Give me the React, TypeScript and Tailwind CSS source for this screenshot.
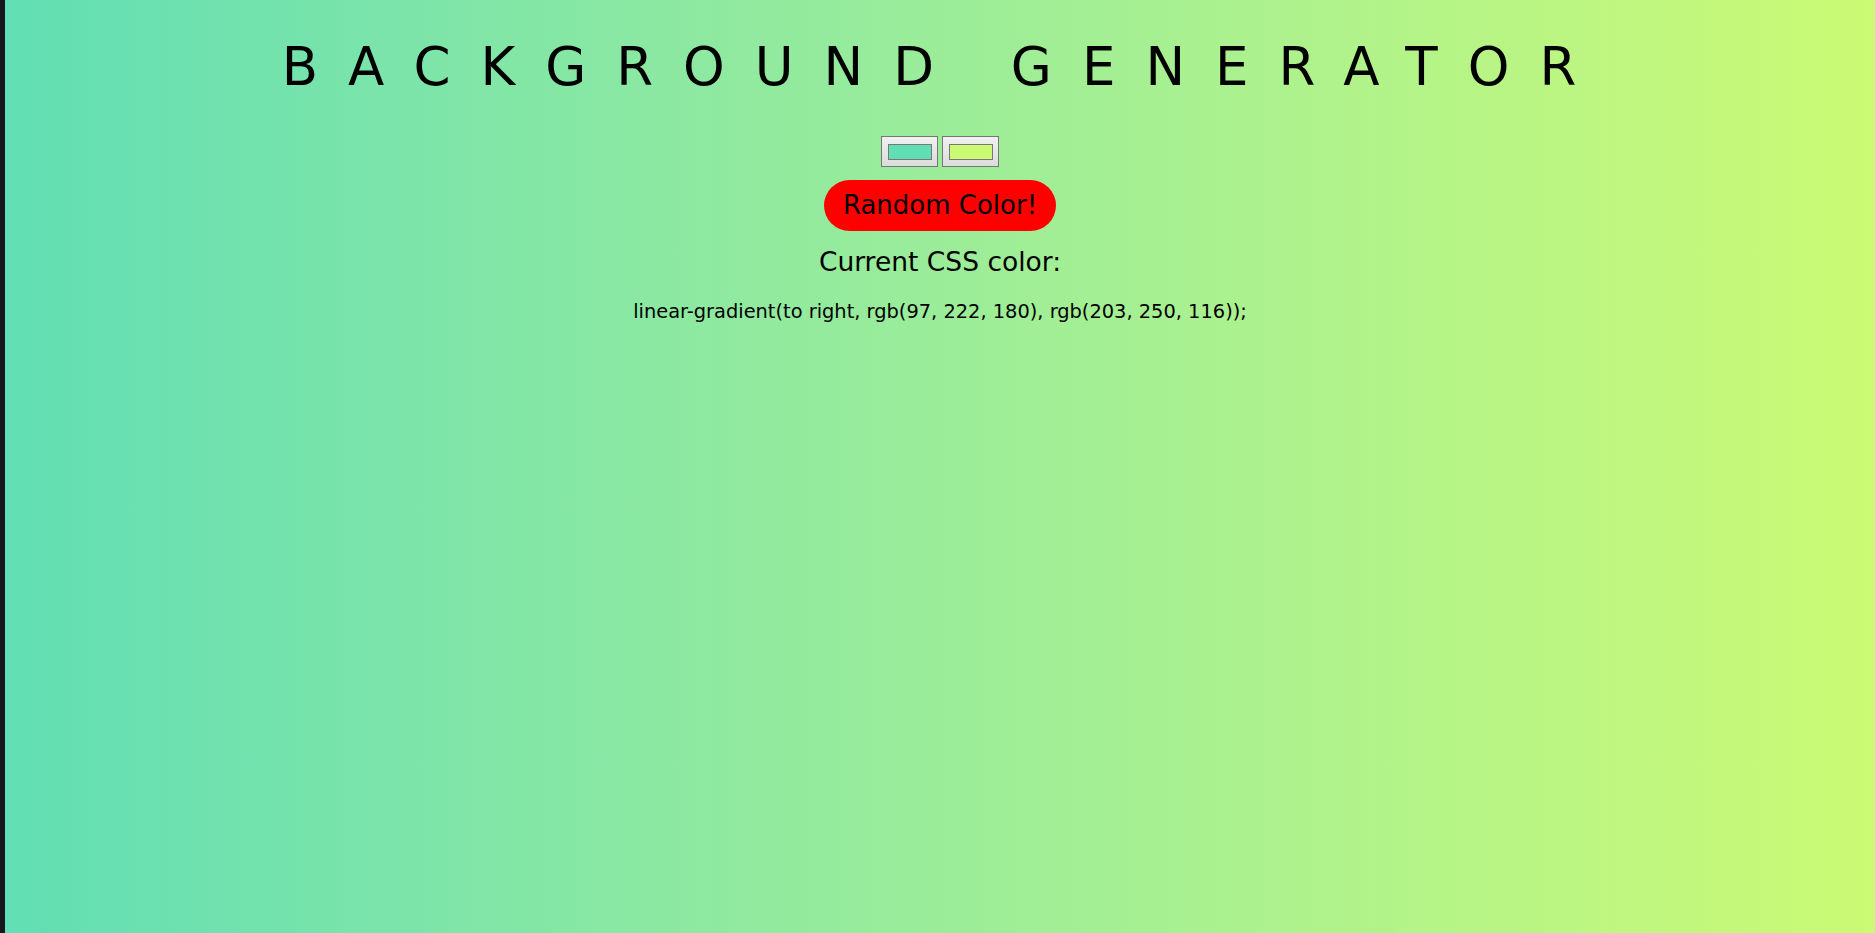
export default function App() {
  const left = 'rgb(97, 222, 180)';
  const right = 'rgb(203, 250, 116)';

  return (
    <div className="flex h-screen w-full">
      <div className="w-[5px] shrink-0 bg-[#16181d]" />
      <div className="flex flex-1 flex-col items-center bg-linear-to-r from-[#61deb4] to-[#cbfa74] font-['DejaVu_Sans',sans-serif] text-black">
        <h1 className="mt-[35px] pl-[8px] text-[53px] font-normal leading-[64px] tracking-[30px]">
          BACKGROUND GENERATOR
        </h1>

        {/* colour pickers */}
        <div className="mt-[37px] flex gap-[4px]">
          <div className="flex h-[31px] w-[57px] items-center justify-center border border-[#767676] bg-linear-to-b from-[#f0f0f0] to-[#dcdcdc]">
            <div className="h-[16px] w-[44px] border border-[#777] bg-[#61deb4]" />
          </div>
          <div className="flex h-[31px] w-[57px] items-center justify-center border border-[#767676] bg-linear-to-b from-[#f0f0f0] to-[#dcdcdc]">
            <div className="h-[16px] w-[44px] border border-[#777] bg-[#cbfa74]" />
          </div>
        </div>

        <button className="mt-[13px] h-[51px] rounded-full bg-[#ff0000] px-[19px] text-[26px] text-black">
          Random Color!
        </button>

        <h3 className="mt-[14px] text-[26.5px] leading-[34px]">Current CSS color:</h3>

        <p className="mt-[21px] text-[19.4px] leading-[24px]">
          linear-gradient(to right, {left}, {right});
        </p>
      </div>
    </div>
  );
}
